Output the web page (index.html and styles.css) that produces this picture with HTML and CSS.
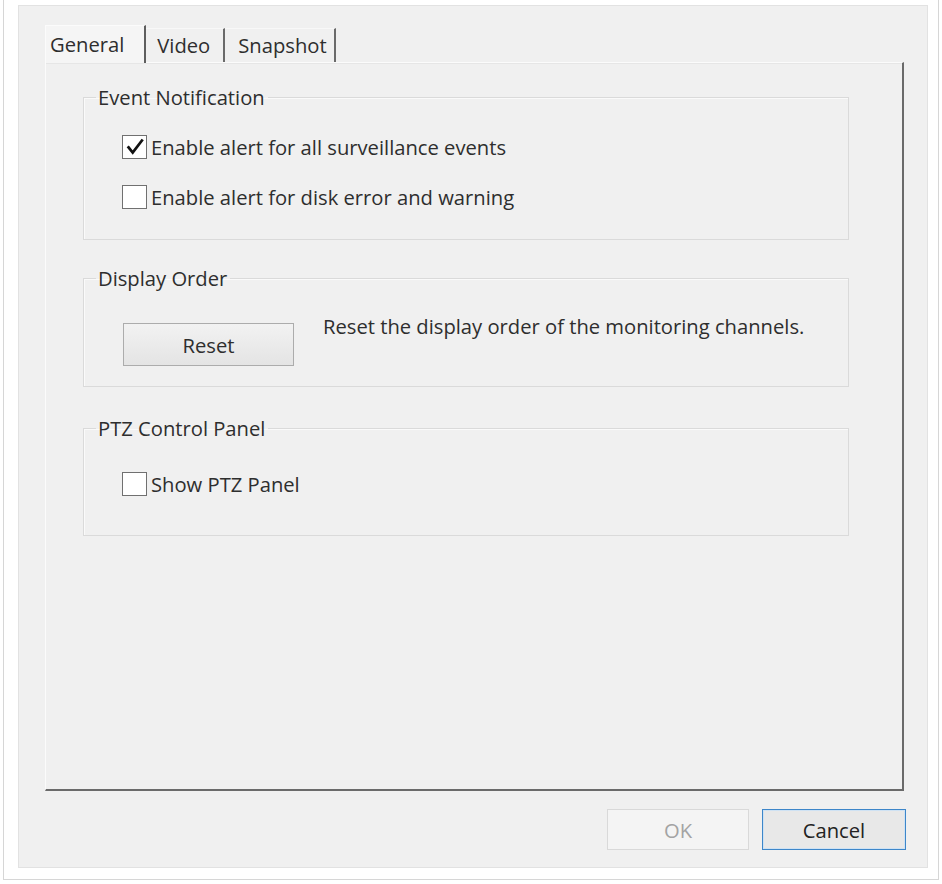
FILE: index.html
```html
<!DOCTYPE html>
<html lang="en">
<head>
<meta charset="utf-8">
<title>Settings</title>
<link rel="stylesheet" href="styles.css">
</head>
<body>
<div class="window">
  <div class="dialog">
    <div class="tabs">
      <div class="tab tab-general active">General</div>
      <div class="tab tab-video">Video</div>
      <div class="tab tab-snapshot">Snapshot</div>
    </div>
    <div class="panel">
      <fieldset class="group group-events">
        <legend>Event Notification</legend>
        <div class="group-body">
          <label class="check">
            <span class="box"><svg viewBox="0 0 24 24" width="22" height="22"><path d="M5 12.5 L9.5 18 L19.5 5" fill="none" stroke="#111" stroke-width="3" stroke-linecap="square" stroke-linejoin="miter"/></svg></span>
            <span class="check-label">Enable alert for all surveillance events</span>
          </label>
          <label class="check">
            <span class="box"></span>
            <span class="check-label">Enable alert for disk error and warning</span>
          </label>
        </div>
      </fieldset>
      <fieldset class="group group-order">
        <legend>Display Order</legend>
        <div class="group-body">
          <button class="btn btn-reset" type="button">Reset</button>
          <p class="desc">Reset the display order of the monitoring channels.</p>
        </div>
      </fieldset>
      <fieldset class="group group-ptz">
        <legend>PTZ Control Panel</legend>
        <div class="group-body">
          <label class="check">
            <span class="box"></span>
            <span class="check-label">Show PTZ Panel</span>
          </label>
        </div>
      </fieldset>
    </div>
    <div class="footer">
      <button class="btn btn-ok" type="button" disabled>OK</button>
      <button class="btn btn-cancel" type="button">Cancel</button>
    </div>
  </div>
</div>
</body>
</html>
```
FILE: styles.css
```css
* { box-sizing: border-box; }

html, body {
  margin: 0;
  padding: 0;
  background: #ffffff;
}

body {
  font-family: "Open Sans", "Noto Sans", "Liberation Sans", sans-serif;
  font-size: 20.2px;
  color: #2e2e2e;
}

.window {
  margin-left: 3px;
  width: 936px;
  height: 880px;
  padding: 5px 10px 10px 14px;
  border-left: 1px solid #d6d6d6;
  border-right: 1px solid #d6d6d6;
  border-bottom: 1px solid #d6d6d6;
}

.dialog {
  width: 910px;
  height: 863px;
  background: #f0f0f0;
  border: 1px solid #e2e2e2;
  padding: 19px 23px 17px 26px;
  display: flex;
  flex-direction: column;
}

/* Tabs */
.tabs {
  display: flex;
  align-items: flex-end;
  position: relative;
  z-index: 1;
}

.tab {
  height: 34px;
  line-height: 32px;
  border-top: 1px solid #f8f8f8;
  border-right: 2px solid #6a6a6a;
  white-space: nowrap;
}

.tab.active {
  height: 38px;
  line-height: 36px;
  margin-bottom: -1px;
  padding: 0 20px 0 4px;
  background: #f5f5f5;
  border-top: 1px solid #fbfbfb;
  border-left: 1px solid #fbfbfb;
  border-right: 2px solid #5e5e5e;
}

.tab-video { padding: 0 13px 0 11px; }
.tab-snapshot { padding: 0 7px 0 13px; }

/* Panel */
.panel {
  flex: 1;
  background: #f0f0f0;
  border-top: 1px solid #fbfbfb;
  border-left: 1px solid #fbfbfb;
  border-right: 2px solid #6a6a6a;
  border-bottom: 2px solid #6a6a6a;
  padding: 23px 53px 0 37px;
  box-shadow: inset 0 1px 0 #e6e6e6;
}

/* Group boxes */
.group {
  margin: 0;
  padding: 0;
  min-width: 0;
  border: 1px solid #dadada;
  box-shadow: inset 1px 1px 0 #fafafa;
}

.group + .group { margin-top: 27px; }
.group-ptz { margin-top: 30px !important; }

.group legend {
  margin-left: 12px;
  padding: 0 3px 0 2px;
  line-height: 22px;
}

.group-events .group-body {
  padding: 27px 0 30px 38px;
  display: flex;
  flex-direction: column;
  gap: 26px;
}

.group-order .group-body {
  padding: 34px 0 20px 39px;
  display: flex;
  align-items: flex-start;
  gap: 29px;
}

.group-ptz .group-body {
  padding: 33px 0 39px 38px;
}

/* Checkboxes */
.check {
  display: flex;
  align-items: center;
  gap: 4px;
  height: 24px;
}

.box {
  width: 25px;
  height: 24px;
  background: #ffffff;
  border: 1px solid #707070;
  display: flex;
  align-items: center;
  justify-content: center;
}

.box svg { display: block; }

.check-label {
  line-height: 24px;
  white-space: nowrap;
}

/* Buttons */
.btn {
  font-family: inherit;
  font-size: 20.2px;
  color: #2e2e2e;
  margin: 0;
  padding: 0;
}

.btn-reset {
  width: 171px;
  height: 43px;
  background: linear-gradient(#f2f2f2, #e4e4e4);
  border: 1px solid #acacac;
}

.desc {
  margin: -9px 0 0;
  line-height: 24px;
  white-space: nowrap;
}

.footer {
  display: flex;
  justify-content: flex-end;
  gap: 13px;
  margin-top: 18px;
  margin-right: -2px;
}

.btn-ok {
  width: 142px;
  height: 41px;
  background: #f4f4f4;
  border: 1px solid #d9d9d9;
  color: #a3a3a3;
}

.btn-cancel {
  width: 144px;
  height: 41px;
  background: #e8e8e8;
  border: 1px solid #3d86c9;
  box-shadow: inset 0 0 0 1px #cfe2f3;
  color: #222;
}
```
